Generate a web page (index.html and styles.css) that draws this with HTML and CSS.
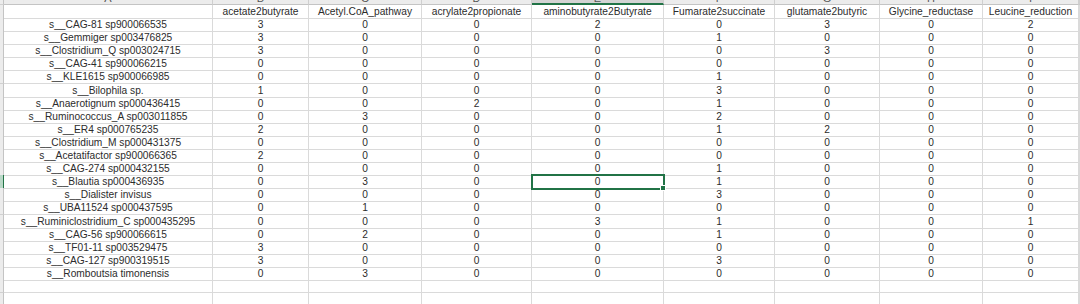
FILE: index.html
```html
<!DOCTYPE html>
<html>
<head>
<meta charset="utf-8">
<link rel="stylesheet" href="styles.css">
</head>
<body>
<div class="sheet">
  <div class="r top"><span class="h"></span><span><b>A</b></span><span><b>B</b></span><span><b>C</b></span><span><b>D</b></span><span class="csel"><b>E</b></span><span><b>F</b></span><span><b>G</b></span><span><b>H</b></span><span><b>I</b></span><span><b>J</b></span></div>
  <div class="r"><span class="h"></span><span></span><span>acetate2butyrate</span><span>Acetyl.CoA_pathway</span><span>acrylate2propionate</span><span>aminobutyrate2Butyrate</span><span>Fumarate2succinate</span><span>glutamate2butyric</span><span>Glycine_reductase</span><span>Leucine_reduction</span><span></span></div>
  <div class="r"><span class="h"></span><span>s__CAG-81 sp900066535</span><span>3</span><span>0</span><span>0</span><span>2</span><span>0</span><span>3</span><span>0</span><span>2</span><span></span></div>
  <div class="r"><span class="h"></span><span>s__Gemmiger sp003476825</span><span>3</span><span>0</span><span>0</span><span>0</span><span>1</span><span>0</span><span>0</span><span>0</span><span></span></div>
  <div class="r"><span class="h"></span><span>s__Clostridium_Q sp003024715</span><span>3</span><span>0</span><span>0</span><span>0</span><span>0</span><span>3</span><span>0</span><span>0</span><span></span></div>
  <div class="r"><span class="h"></span><span>s__CAG-41 sp900066215</span><span>0</span><span>0</span><span>0</span><span>0</span><span>0</span><span>0</span><span>0</span><span>0</span><span></span></div>
  <div class="r"><span class="h"></span><span>s__KLE1615 sp900066985</span><span>0</span><span>0</span><span>0</span><span>0</span><span>1</span><span>0</span><span>0</span><span>0</span><span></span></div>
  <div class="r"><span class="h"></span><span>s__Bilophila sp.</span><span>1</span><span>0</span><span>0</span><span>0</span><span>3</span><span>0</span><span>0</span><span>0</span><span></span></div>
  <div class="r"><span class="h"></span><span>s__Anaerotignum sp000436415</span><span>0</span><span>0</span><span>2</span><span>0</span><span>1</span><span>0</span><span>0</span><span>0</span><span></span></div>
  <div class="r"><span class="h"></span><span>s__Ruminococcus_A sp003011855</span><span>0</span><span>3</span><span>0</span><span>0</span><span>2</span><span>0</span><span>0</span><span>0</span><span></span></div>
  <div class="r"><span class="h"></span><span>s__ER4 sp000765235</span><span>2</span><span>0</span><span>0</span><span>0</span><span>1</span><span>2</span><span>0</span><span>0</span><span></span></div>
  <div class="r"><span class="h"></span><span>s__Clostridium_M sp000431375</span><span>0</span><span>0</span><span>0</span><span>0</span><span>0</span><span>0</span><span>0</span><span>0</span><span></span></div>
  <div class="r"><span class="h"></span><span>s__Acetatifactor sp900066365</span><span>2</span><span>0</span><span>0</span><span>0</span><span>0</span><span>0</span><span>0</span><span>0</span><span></span></div>
  <div class="r"><span class="h"></span><span>s__CAG-274 sp000432155</span><span>0</span><span>0</span><span>0</span><span>0</span><span>1</span><span>0</span><span>0</span><span>0</span><span></span></div>
  <div class="r"><span class="h hsel"></span><span>s__Blautia sp000436935</span><span>0</span><span>3</span><span>0</span><span class="sel">0</span><span>1</span><span>0</span><span>0</span><span>0</span><span></span></div>
  <div class="r"><span class="h"></span><span>s__Dialister invisus</span><span>0</span><span>0</span><span>0</span><span>0</span><span>3</span><span>0</span><span>0</span><span>0</span><span></span></div>
  <div class="r"><span class="h"></span><span>s__UBA11524 sp000437595</span><span>0</span><span>1</span><span>0</span><span>0</span><span>0</span><span>0</span><span>0</span><span>0</span><span></span></div>
  <div class="r"><span class="h"></span><span>s__Ruminiclostridium_C sp000435295</span><span>0</span><span>0</span><span>0</span><span>3</span><span>1</span><span>0</span><span>0</span><span>1</span><span></span></div>
  <div class="r"><span class="h"></span><span>s__CAG-56 sp900066615</span><span>0</span><span>2</span><span>0</span><span>0</span><span>1</span><span>0</span><span>0</span><span>0</span><span></span></div>
  <div class="r"><span class="h"></span><span>s__TF01-11 sp003529475</span><span>3</span><span>0</span><span>0</span><span>0</span><span>0</span><span>0</span><span>0</span><span>0</span><span></span></div>
  <div class="r"><span class="h"></span><span>s__CAG-127 sp900319515</span><span>3</span><span>0</span><span>0</span><span>0</span><span>3</span><span>0</span><span>0</span><span>0</span><span></span></div>
  <div class="r"><span class="h"></span><span>s__Romboutsia timonensis</span><span>0</span><span>3</span><span>0</span><span>0</span><span>0</span><span>0</span><span>0</span><span>0</span><span></span></div>
  <div class="r"><span class="h"></span><span></span><span></span><span></span><span></span><span></span><span></span><span></span><span></span><span></span><span></span></div>
  <div class="r"><span class="h"></span><span></span><span></span><span></span><span></span><span></span><span></span><span></span><span></span><span></span><span></span></div>
</div>
</body>
</html>
```
FILE: styles.css
```css
html, body {
  margin: 0;
  padding: 0;
  background: #ffffff;
  overflow: hidden;
}

.sheet {
  width: 1080px;
  height: 304px;
  overflow: hidden;
  font-family: "Liberation Sans", Arial, sans-serif;
  font-size: 10.2px;
  color: #2c2c2c;
}

.r {
  display: grid;
  grid-template-columns: 4px 209px 96px 113px 110px 132px 111px 105px 103px 96px 1fr;
  height: 13.1px;
}

.r > span {
  display: block;
  box-sizing: border-box;
  border-right: 1px solid #dadada;
  border-bottom: 1px solid #dadada;
  text-align: center;
  white-space: nowrap;
  overflow: visible;
  line-height: 13px;
}

.r > .h {
  background: #ececec;
  border-right: 1px solid #c4c4c4;
  border-bottom: 1px solid #d0d0d0;
}

.r > .hsel {
  background: #b9d8c7;
  border-right: 1px solid #217346;
}

.top {
  height: 5px;
}

.top > span {
  background: #ececec;
  border-right: 1px solid #cfcfcf;
  border-bottom: 1px solid #c4c4c4;
  overflow: hidden;
  line-height: 11px;
}

.top > span > b {
  display: block;
  font-weight: normal;
  font-size: 11px;
  line-height: 11px;
  color: #555;
  margin-top: -7px;
}

.top > .csel {
  background: #d3d3d3;
  border-bottom: 2px solid #217346;
}

.r > .sel {
  position: relative;
  outline: 2px solid #217346;
  outline-offset: -1px;
  z-index: 1;
}

.sel::after {
  content: "";
  position: absolute;
  right: -3px;
  bottom: -3px;
  width: 4px;
  height: 4px;
  background: #217346;
  border: 1px solid #ffffff;
}
```
